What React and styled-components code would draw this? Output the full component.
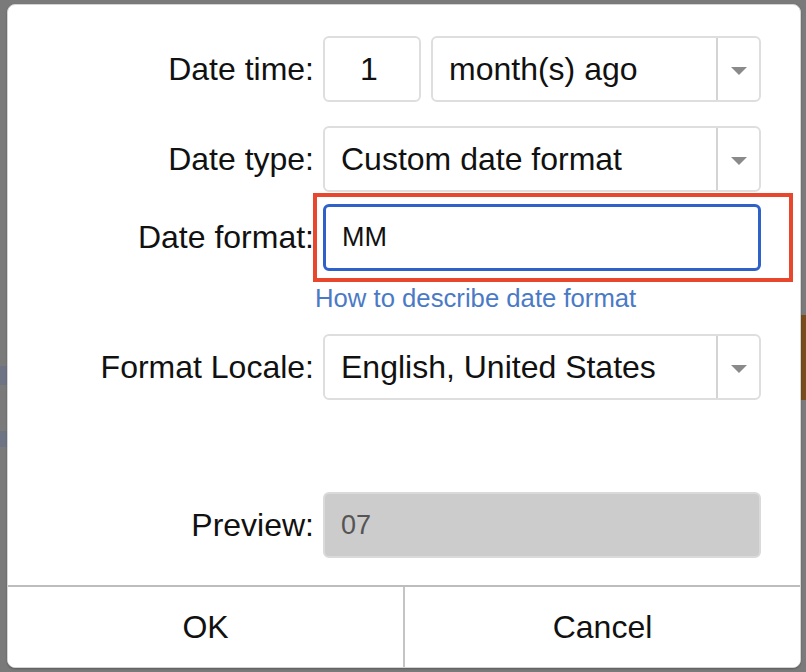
import styled, { createGlobalStyle } from 'styled-components';

const GlobalStyle = createGlobalStyle`
  html, body {
    margin: 0;
    padding: 0;
    background: #7a7a7a;
    font-family: "Liberation Sans", Arial, sans-serif;
  }
`;

// dimmed app behind the modal, only a few px of it show
const Backdrop = styled.div`
  width: 806px;
  height: 672px;
  box-sizing: border-box;
  padding: 4px 5px 4px 7px;
  background-color: #7a7a7a;
  background-image:
    linear-gradient(to bottom, transparent 315px, #7a4b1d 315px, #7a4b1d 400px, transparent 400px),
    linear-gradient(to bottom, transparent 366px, #6e7483 366px, #6e7483 385px, transparent 385px, transparent 431px, #6e7483 431px, #6e7483 447px, transparent 447px);
  background-size: 6px 100%, 7px 100%;
  background-position: right top, left top;
  background-repeat: no-repeat;
`;

const Dialog = styled.div`
  height: 100%;
  box-sizing: border-box;
  background: #fff;
  border: 1px solid #d4d4d4;
  border-radius: 8px;
  box-shadow: 0 1px 2px rgba(0, 0, 0, 0.25);
  display: flex;
  flex-direction: column;
  overflow: hidden;
`;

const Body = styled.div`
  flex: 1;
  padding: 31px 39px 0 0;
  display: flex;
  flex-direction: column;
`;

const Row = styled.div`
  display: grid;
  grid-template-columns: 1fr 438px;
  column-gap: 9px;
  align-items: center;
  margin-top: ${p => p.$top || 0}px;
`;

const Label = styled.label`
  text-align: right;
  font-size: 32px;
  color: #111;
  white-space: nowrap;
`;

const Field = styled.div`
  display: flex;
  gap: 10px;
  position: relative;
`;

const Box = styled.div`
  box-sizing: border-box;
  height: 66px;
  border: 2px solid #dedede;
  border-radius: 6px;
  background: #fff;
  display: flex;
  align-items: center;
  font-size: 32px;
  color: #111;
`;

const NumberBox = styled(Box)`
  width: 98px;
  justify-content: center;
  padding-right: 6px;
`;

const Select = styled(Box)`
  flex: 1;
`;

const SelectText = styled.span`
  flex: 1;
  padding-left: 16px;
`;

const Arrow = styled.span`
  width: 41px;
  height: 100%;
  border-left: 2px solid #d4d4d4;
  display: flex;
  align-items: center;
  justify-content: center;
  &::after {
    content: '';
    border-left: 8px solid transparent;
    border-right: 8px solid transparent;
    border-top: 8px solid #8a8a8a;
    margin-top: 4px;
  }
`;

const TextInput = styled(Box)`
  flex: 1;
  height: 67px;
  border: 3px solid #2e62c8;
  padding-left: 16px;
  font-size: 27px;
`;

const Highlight = styled.div`
  position: absolute;
  left: -10px;
  top: -11px;
  right: -32px;
  bottom: -11px;
  border: 4px solid #e9472d;
  pointer-events: none;
`;

const HelpLink = styled.a`
  align-self: flex-start;
  margin: 12px 0 0 307px;
  font-size: 25.7px;
  line-height: 30px;
  color: #4a7ac6;
  text-decoration: none;
`;

const PreviewBox = styled(Box)`
  flex: 1;
  background: #cccccc;
  border-color: #dadada;
  color: #555;
  font-size: 27px;
  padding-left: 16px;
`;

const Footer = styled.div`
  height: 80px;
  flex-shrink: 0;
  border-top: 2px solid #bdbdbd;
  display: grid;
  grid-template-columns: 395px 1fr;
`;

const FooterButton = styled.button`
  border: none;
  background: #fff;
  font-family: inherit;
  font-size: 32px;
  color: #111;
  padding: 0;
  border-left: ${p => (p.$divider ? '2px solid #c4c4c4' : 'none')};
`;

export default function App() {
  return (
    <>
      <GlobalStyle />
      <Backdrop>
        <Dialog>
          <Body>
            <Row>
              <Label>Date time:</Label>
              <Field>
                <NumberBox>1</NumberBox>
                <Select>
                  <SelectText>month(s) ago</SelectText>
                  <Arrow />
                </Select>
              </Field>
            </Row>
            <Row $top={24}>
              <Label>Date type:</Label>
              <Field>
                <Select>
                  <SelectText>Custom date format</SelectText>
                  <Arrow />
                </Select>
              </Field>
            </Row>
            <Row $top={12}>
              <Label>Date format:</Label>
              <Field>
                <TextInput>MM</TextInput>
                <Highlight />
              </Field>
            </Row>
            <HelpLink href="#">How to describe date format</HelpLink>
            <Row $top={21}>
              <Label>Format Locale:</Label>
              <Field>
                <Select>
                  <SelectText>English, United States</SelectText>
                  <Arrow />
                </Select>
              </Field>
            </Row>
            <Row $top={92}>
              <Label>Preview:</Label>
              <Field>
                <PreviewBox>07</PreviewBox>
              </Field>
            </Row>
          </Body>
          <Footer>
            <FooterButton>OK</FooterButton>
            <FooterButton $divider>Cancel</FooterButton>
          </Footer>
        </Dialog>
      </Backdrop>
    </>
  );
}
